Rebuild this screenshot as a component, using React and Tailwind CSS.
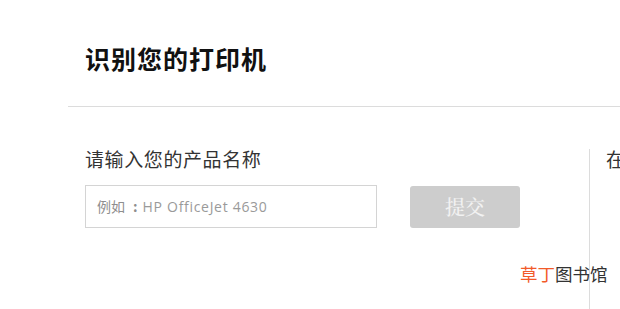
import React from "react";

export default function App() {
  const cjk = { fontFamily: '"Noto Sans CJK SC", "Noto Sans", sans-serif' };
  return (
    <div className="relative w-[620px] h-[309px] overflow-hidden bg-white" style={cjk}>
      <div className="pl-[85px] pt-[43px]">
        <h1 className="text-[25px] leading-[30px] font-bold tracking-[1px] text-[#111]">识别您的打印机</h1>
      </div>
      <div className="ml-[68px] mt-[33px] h-px bg-[#dcdcdc]" />
      <div className="flex mt-[42px]">
        <div className="w-[589px] shrink-0 pl-[85px]">
          <div className="text-[19px] leading-[20px] tracking-[0.6px] text-[#333]">请输入您的产品名称</div>
          <div className="flex items-center mt-[16px]">
            <div className="w-[292px] h-[43px] border border-[#d4d4d4] flex items-center pl-[11px] text-[14px] text-[#8e8e8e]">
              <span>例如</span>
              <span className="ml-[8px] mr-[5px] font-bold">:</span>
              <span style={{ fontFamily: '"Open Sans", sans-serif' }} className="text-[14px] tracking-[0.7px] text-[#9a9a9a]">HP OfficeJet 4630</span>
            </div>
            <div className="ml-[33px] w-[110px] h-[42px] rounded-[3px] bg-[#cdcdcd] flex items-center justify-center text-[20px] font-medium text-[#f2f2f2]" style={{ fontFamily: '"Noto Serif CJK SC", "Noto Sans CJK SC", serif' }}>
              提交
            </div>
          </div>
        </div>
        <div className="border-l border-[#dcdcdc] h-[170px] pl-[16px]">
          <div className="text-[19px] leading-[20px] text-[#333] whitespace-nowrap">在</div>
        </div>
      </div>
      <div className="absolute left-[520px] top-[263px] text-[17.5px] leading-[22px] whitespace-nowrap">
        <span className="text-[#f25a29]">草丁</span>
        <span className="text-[#333]">图书馆</span>
      </div>
    </div>
  );
}
